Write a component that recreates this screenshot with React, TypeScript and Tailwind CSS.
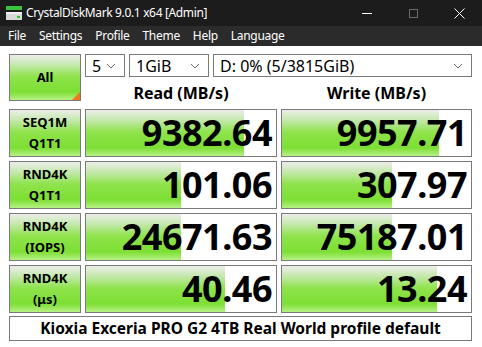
import React from "react";

const font = { fontFamily: '"Noto Sans", "Open Sans", sans-serif' };

const green =
  "bg-[linear-gradient(to_bottom,#eceee9_0%,#c4e8ad_22%,#8fe34c_48%,#7ddf33_82%,#b6f186_100%)]";

const rows = [
  { a: "SEQ1M", b: "Q1T1", read: "9382.64", write: "9957.71", rw: 83, ww: 83 },
  { a: "RND4K", b: "Q1T1", read: "101.06", write: "307.97", rw: 50, ww: 58 },
  { a: "RND4K", b: "(IOPS)", read: "24671.63", write: "75187.01", rw: 50, ww: 58 },
  { a: "RND4K", b: "(μs)", read: "40.46", write: "13.24", rw: 73, ww: 82 },
];

function Chevron() {
  return (
    <svg width="10" height="6" viewBox="0 0 10 6" className="shrink-0">
      <path d="M1 1l4 4 4-4" fill="none" stroke="#6b6b6b" strokeWidth="1" />
    </svg>
  );
}

function Select({ value, w }: { value: string; w: string }) {
  return (
    <div className={`${w} h-[23px] flex items-center justify-between border border-[#7a7a7a] bg-white pl-[6px] pr-[8px] text-[16px] text-black`}>
      <span className="leading-none">{value}</span>
      <Chevron />
    </div>
  );
}

function ValueCell({ value, pct }: { value: string; pct: number }) {
  return (
    <div className="relative h-[48px] border border-[#7a7a7a] bg-white overflow-hidden">
      <div className={`absolute inset-y-0 left-0 ${green}`} style={{ width: `${pct}%` }} />
      <div className="relative h-full flex items-center justify-end pr-[4px] text-[36px] font-bold text-black tracking-[-0.5px] leading-none">
        {value}
      </div>
    </div>
  );
}

function TitleIcon() {
  return (
    <svg width="18" height="16" viewBox="0 0 18 16">
      <rect x="1" y="1" width="16" height="4" fill="#3cc43c" />
      <rect x="1" y="7" width="16" height="8" fill="#d8d8d8" />
      <rect x="1" y="7" width="16" height="2" fill="#f0f0f0" />
      <rect x="12" y="11" width="3" height="2" fill="#3cc43c" />
    </svg>
  );
}

export default function App() {
  return (
    <div className="w-[482px] h-[347px] bg-white overflow-hidden" style={font}>
      <div className="h-[26px] bg-[#1c1c1c] flex items-center text-white">
        <div className="pl-[5px] pr-[3px] flex items-center">
          <TitleIcon />
        </div>
        <span className="text-[12px] tracking-[-0.35px]">CrystalDiskMark 9.0.1 x64 [Admin]</span>
        <div className="ml-auto flex items-center h-full">
          <div className="w-[46px] h-full flex items-center justify-center">
            <div className="w-[10px] h-px bg-white" />
          </div>
          <div className="w-[46px] h-full flex items-center justify-center">
            <div className="w-[9px] h-[9px] border border-[#6a6a6a]" />
          </div>
          <div className="w-[46px] h-full flex items-center justify-center">
            <svg width="11" height="11" viewBox="0 0 11 11">
              <path d="M0.5 0.5l10 10M10.5 0.5l-10 10" stroke="#fff" strokeWidth="1" />
            </svg>
          </div>
        </div>
      </div>
      <div className="h-[20px] bg-[#2b2b2b] flex items-center gap-[13px] pl-[8px] text-[12px] tracking-[-0.3px] text-white">
        <span>File</span>
        <span>Settings</span>
        <span>Profile</span>
        <span>Theme</span>
        <span>Help</span>
        <span>Language</span>
      </div>

      <div className="pl-[9px] pt-[8px] w-[472px]">
        <div className="flex gap-[4px]">
          <div className={`relative w-[72px] h-[47px] border border-[#7a7a7a] ${green} flex items-center justify-center text-[13px] font-bold text-black`}>
            All
            <div className="absolute right-0 bottom-0 w-0 h-0 border-l-[8px] border-l-transparent border-b-[8px] border-b-[#f07818]" />
          </div>
          <div className="flex flex-col w-[387px]">
            <div className="flex gap-[4px]">
              <Select value="5" w="w-[40px]" />
              <Select value="1GiB" w="w-[80px]" />
              <Select value="D: 0% (5/3815GiB)" w="w-[259px]" />
            </div>
            <div className="flex gap-[4px] pt-[5px]">
              <div className="w-[192px] text-center text-[16px] font-bold text-black leading-[22px]">Read (MB/s)</div>
              <div className="w-[191px] text-center text-[16px] font-bold text-black leading-[22px]">Write (MB/s)</div>
            </div>
          </div>
        </div>

        <div className="mt-[5px] flex flex-col gap-[4px]">
          {rows.map((r, i) => (
            <div key={i} className="grid grid-cols-[72px_192px_191px] gap-x-[4px]">
              <div className={`h-[48px] border border-[#7a7a7a] ${green} flex flex-col items-center justify-center text-[13px] font-bold text-black leading-[21px]`}>
                <span>{r.a}</span>
                <span>{r.b}</span>
              </div>
              <ValueCell value={r.read} pct={r.rw} />
              <ValueCell value={r.write} pct={r.ww} />
            </div>
          ))}
        </div>

        <div className="mt-[3px] h-[25px] w-[463px] border border-[#7a7a7a] bg-white flex items-center justify-center text-[15.5px] font-bold text-black">
          Kioxia Exceria PRO G2 4TB Real World profile default
        </div>
      </div>
    </div>
  );
}
